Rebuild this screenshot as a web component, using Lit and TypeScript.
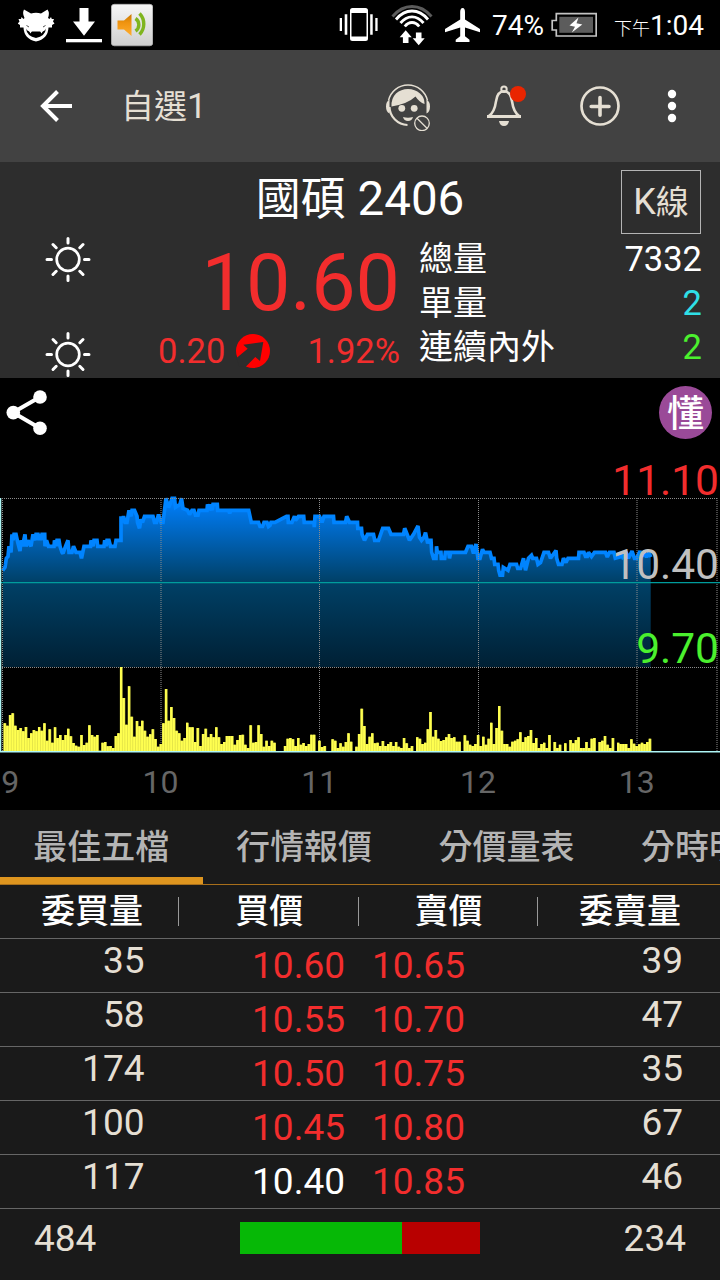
import { LitElement, html, css, svg } from "lit";
import { customElement } from "lit/decorators.js";

/* Intraday price samples: [x, ticks of 0.05 above the previous close]. */
const PRICES: [number, number][] = [
  [2.7, 2], [5, 2.5], [5.5, 3], [6.3, 4], [8, 4.3], [9, 6], [11, 5], [12, 8], [13, 7], [14, 8], [16, 8], [18, 6.5], [20, 5.2], [21, 7],
  [22.5, 6], [25, 8], [26, 6], [28, 7], [31, 6], [33, 8], [35, 7], [36, 8], [38, 8], [39, 7], [40, 8], [41, 7], [42, 8], [44.7, 8], [45, 6], [46.5, 7],
  [48.5, 6], [54, 6], [54.5, 7], [56, 6], [57, 7], [59, 7], [60, 6], [62, 5], [63, 4.8], [65.5, 6], [68, 7], [69, 5], [72, 5], [73.5, 6], [76, 5],
  [80, 5], [81.5, 4], [84, 6], [90.5, 6], [91, 7], [93, 6], [94, 7], [97, 7], [97.7, 6], [104, 6], [104.7, 7], [106, 6], [107, 7], [109, 7], [110.5, 6], [115, 6], [116, 7],
  [121, 7], [121, 11], [122, 10], [123.5, 11], [125, 10], [127, 10], [128, 11], [129, 12], [131, 11], [132, 12], [134.5, 12], [137, 11], [137.5, 10], [139.5, 9],
  [141, 10.5], [142.5, 10], [144.5, 11], [153, 11], [154.5, 10], [156.5, 10], [158.5, 11.3], [161, 10], [163, 10], [164.5, 12],
  [166, 14], [168.5, 12.5], [170, 13], [172, 14], [174.5, 14], [175.5, 12.5], [180, 13], [181.5, 14], [183, 12.3], [187.5, 12],
  [189.5, 11.3], [192, 12], [194, 12], [195.5, 11.2], [198, 11.2], [199, 12], [207, 12], [207.5, 13], [209, 12], [210, 13], [212, 12], [213, 13], [217.3, 13], [217.7, 12],
  [228.5, 12], [229.7, 11.5], [231, 12], [248.7, 12], [251.3, 10], [258.5, 10], [260, 9.3], [262.5, 9.3], [264, 10], [267, 10],
  [268.5, 9.3], [270, 9.5], [271, 10], [275, 10], [286.5, 11], [288, 11], [288.3, 10], [292, 10], [294.5, 11], [295.5, 10.3],
  [298.5, 11], [303.7, 11], [304.2, 10], [314, 10], [314.3, 9.2], [315, 11], [319.5, 11], [322, 10], [324, 11], [333.5, 11],
  [334, 10], [345.5, 10], [346.7, 11], [349.5, 10], [357.5, 10], [357.8, 9], [361.5, 9], [362, 8], [364.5, 7], [367.5, 8],
  [373.5, 8], [374.7, 7], [378.5, 7], [382.7, 9], [388.5, 9], [391, 8], [403.5, 8], [404.7, 9], [409.5, 7], [413.5, 8],
  [418, 9.4], [419.5, 7.5], [421.5, 7], [424, 7.5], [425.5, 8.3], [427.7, 6.5], [429, 7], [431, 7], [431.7, 5], [433.5, 4],
  [436, 4], [436.5, 6], [437.3, 5], [441, 5], [441.3, 4], [444.7, 4], [445.3, 5], [448.7, 5], [449.5, 4], [450.7, 5], [465.5, 5],
  [468, 6], [471.5, 6], [473.5, 4.8], [476, 6.4], [478, 4], [480, 4], [482.5, 5.5], [484, 5], [490, 5], [491.5, 4], [494, 4],
  [494.7, 3], [498, 3], [498.7, 2], [500, 1.2], [502.5, 1.2], [503.3, 2.5], [508, 2], [510, 3], [516.5, 3], [517.7, 2.3],
  [520.5, 2.3], [523.5, 4], [525.5, 2], [528.5, 4], [531.5, 4.5], [532.7, 4], [536.5, 4], [538, 3], [540.5, 3.3], [544, 5],
  [548.5, 5], [550.5, 4], [556, 5.3], [556.7, 4], [558.5, 3], [562, 3], [563.5, 4], [566, 3.3], [568, 4], [578.5, 4], [579, 5],
  [584, 5], [585.5, 4.3], [587.3, 4.3], [588.5, 5], [591.5, 4.3], [594.5, 5], [605.5, 5], [607.3, 4.2], [609.5, 5], [614, 5],
  [615.3, 4], [619.5, 4.2], [620.5, 5], [622.7, 4.2], [626.5, 4.8], [628.5, 4], [632, 5.2], [634.5, 4], [636.7, 4], [640, 5.2],
  [642, 4.3], [644, 5], [646.5, 4.2], [649, 5], [650.7, 4.2],
];

/* One bar a minute, the busiest one being 252. */
const VOLUMES = [
  83, 76, 108, 113, 76, 63, 69, 59, 72, 39, 53, 63, 59, 72, 61, 83, 31, 65, 25, 71, 39, 48, 33, 48, 67, 44, 24, 16, 13, 48, 18, 25,
  77, 48, 43, 48, 1, 25, 27, 14, 15, 9, 45, 53, 252, 159, 79, 194, 103, 43, 90, 74, 91, 61, 43, 50, 65, 36, 13, 21, 83, 186, 91,
  132, 99, 61, 53, 31, 39, 85, 71, 71, 27, 69, 15, 51, 67, 41, 51, 41, 71, 41, 21, 27, 45, 45, 45, 19, 33,
  48, 49, 19, 9, 77, 25, 27, 77, 51, 13, 31, 15, 31, 25, 0, 0, 0, 15, 37, 39, 35, 15, 39, 19, 24, 15, 21, 49, 49, 0, 31, 12, 15,
  0, 0, 35, 31, 9, 23, 13, 27, 53, 28, 0, 13, 51, 127, 75, 21, 43, 53, 23, 25, 15, 30, 15, 21, 27, 15, 27, 13, 9, 39, 23, 9, 15,
  0, 41, 37, 21, 25, 65, 117, 43, 63, 37, 30, 33, 41, 51, 39, 41, 28, 28, 0, 47, 31, 19, 15, 21, 48,
  15, 43, 19, 37, 85, 21, 69, 135, 61, 21, 21, 13, 28, 31, 35, 56, 27, 41, 45, 63, 24, 39, 9, 21, 25, 9, 48, 0, 27, 9, 19, 0, 23,
  0, 33, 23, 33, 41, 9, 9, 27, 9, 37, 39, 0, 27, 31, 45, 19, 9, 39, 0, 25, 21, 21, 21, 9, 35, 22, 15, 20, 25, 21, 27, 37,
];

const FONT = css`
  :host {
    font-family: Roboto, "Noto Sans CJK TC", sans-serif;
  }
  svg {
    display: block;
    flex: none;
  }
`;

@customElement("status-bar")
class StatusBar extends LitElement {
  static styles = [FONT, css`
    :host {
      display: flex;
      height: 50px;
      box-sizing: border-box;
      background: #000;
      color: #fff;
      padding: 0 16px 0 18px;
    }
    .left { display: flex; gap: 10px; }
    .speaker { margin-left: -1px; }
    .right { display: flex; margin-left: auto; }
    .wifi { margin-left: 12px; }
    .plane { margin-left: 11px; }
    .battery { margin-left: 5.5px; }
    .text { font-size: 28px; line-height: 50px; padding-top: 1px; white-space: nowrap; }
    .pct { margin-left: 11.5px; width: 53px; }
    .time { margin-left: 17.5px; }
    .ampm { font-size: 18px; font-weight: 300; }
  `];
  render() {
    return html`
      <div class="left">
        <svg width="38" height="50" viewBox="18 0 38 50">
          <path fill="#fff" d="M24 9.5 L31 13.5 Q36 11.8 41 13.5 L47.5 9.5 Q50 13 48 18 L49.5 19 L51 17 L51.8 19 L54 19 L53 21.5 L54.5 23.5 L52 25 L52 27.5 L48.5 27.5 Q48 39 36 41.5 Q24 39 23.5 27.5 L20 27.5 L20 25 L17.8 23.5 L19.5 21.5 L18.5 19 L21 19 L21.5 17 L23.5 19 L24.5 18 Q22 13 24 9.5Z"/>
          <path fill="none" stroke="#000" stroke-width=".7" d="M26.500 25.500 L29 27 M45.500 25.500 L43 27"/>
          <path fill="#000" d="M26 28.500 Q27.500 32 31 31.500 L41 31.500 Q44.500 32 46 28.500 Q45 36.500 36 38 Q27 36.500 26 28.500Z"/>
          <path fill="#fff" d="M29 31 l1.500 2.500 1.500-2.500z M40 31 l1.500 2.500 1.500-2.500z"/>
        </svg>
        <svg width="36" height="50" viewBox="66 0 36 50" fill="#fff">
          <path d="M79.500 8h9v13.500h6.500L84 35.800 73 21.500h6.500z"/>
          <rect x="66" y="39" width="36" height="3.300"/>
        </svg>
        <svg class="speaker" width="42" height="50" viewBox="111 0 42 50">
          <defs>
            <linearGradient id="plate" x1="0" y1="0" x2="0" y2="1"><stop offset="0" stop-color="#f6f6f6"/><stop offset="1" stop-color="#cfcfcf"/></linearGradient>
            <linearGradient id="cone" x1="0" y1="0" x2="0" y2="1"><stop offset="0" stop-color="#c87800"/><stop offset=".4" stop-color="#f09410"/><stop offset="1" stop-color="#ffae30"/></linearGradient>
          </defs>
          <rect x="111.300" y="4.300" width="41.500" height="41.500" rx="3" fill="url(#plate)" stroke="#b4b4b4" stroke-width=".7"/>
          <path d="M117.500 20.500h6.500l7.500-6.500v22l-7.500-6.500h-6.500z" fill="url(#cone)"/>
          <path d="M135.500 18.500a7.500 7.500 0 0 1 0 12.500M139.500 13.500a15 15 0 0 1 0 21" fill="none" stroke="#7fb51e" stroke-width="3.400"/>
        </svg>
      </div>
      <div class="right">
        <svg width="40" height="50" viewBox="339 0 40 50" fill="#fff">
          <path fill-rule="evenodd" d="M352.500 8h13q2.500 0 2.500 2.500v28q0 2.500-2.500 2.500h-13q-2.500 0-2.500-2.500v-28q0-2.500 2.500-2.500zM351.500 13v23.500h15v-23.500z"/>
          <path d="M344.700 14.300h2.600v20.500h-2.600zM339.700 18h2.300v13h-2.300zM370.200 14.300h2.500v20.500h-2.500zM375.300 18h2.300v13h-2.300z"/>
        </svg>
        <svg class="wifi" width="42" height="50" viewBox="391 0 42 50" fill="none" stroke="#fff" stroke-width="2.800">
          <path stroke="#5b5b5b" d="M392.500 16.500q8.500-10 19.500-10t19.500 10"/>
          <path d="M396 19.500q7-8.500 16-8.500t16 8.500M400.500 23q5-6.200 11.500-6.200t11.500 6.200M404.800 26.500q3-4 7.200-4t7.200 4"/>
          <path fill="#fff" stroke="none" d="M405.700 30.300l6 7h-3.200v5.700h-5.600v-5.700h-3.200zM418.700 45.300l-6-7h3.200v-5.900h5.600v5.900h3.200z"/>
        </svg>
        <svg class="plane" width="37" height="50" viewBox="444 0 37 50" fill="#fff">
          <path d="M462.600 8c1.800 0 2.400 2 2.400 4v7.500l15 9.500v3.300l-15-4.800v8.800l4.500 3.500v2.200h-13.800v-2.200l4.500-3.500v-8.800l-15.200 4.800v-3.300l15.200-9.500v-7.500c0-2 .7-4 2.400-4z"/>
        </svg>
        <span class="text pct">74%</span>
        <svg class="battery" width="46" height="50" viewBox="551 0 46 50">
          <path d="M556.300 13.700h39.900v22.300h-39.900v-6h-4.100v-9.500h4.100z" fill="none" stroke="#c4c4c4" stroke-width="1.700"/>
          <rect x="559.300" y="16.800" width="33.700" height="16" fill="#5c5c5c"/>
          <path fill="#fff" d="M578.500 17.500l-9 8 5.500 1.200-3.200 5.800 10.500-8-5.800-1.200z"/>
        </svg>
        <span class="text time"><span class="ampm">下午</span>1:04</span>
      </div>`;
  }
}

@customElement("app-bar")
class AppBar extends LitElement {
  static styles = [FONT, css`
    :host {
      display: flex;
      align-items: center;
      height: 112px;
      background: #424242;
      color: #e5dfd3;
    }
    .back { margin-left: 39px; }
    .title { font-size: 35px; margin-left: 48px; line-height: 112px; padding-top: 2px; }
    .cjk { font-size: 33px; }
    .agent { margin-left: auto; }
    .bell { margin-left: 55px; }
    .add { margin-left: 53px; }
    .more { margin-left: 46px; margin-right: 42px; }
  `];
  render() {
    return html`
      <svg class="back" width="34" height="34" viewBox="39 89 34 34" fill="none" stroke="#fff" stroke-width="4">
        <path d="M57.500 91.500 L43 106 L57.500 120.500M43 106H72"/>
      </svg>
      <span class="title"><span class="cjk">自選</span>1</span>
      <svg class="agent" width="46" height="50" viewBox="385 81 46 50">
        <path d="M389.500 107a18.500 18.500 0 0 0 18 18" fill="none" stroke="#e5dfd3" stroke-width="2.200"/>
        <path d="M388.500 100.500a20 20 0 0 1 39 0" fill="none" stroke="#e5dfd3" stroke-width="1.500"/>
        <path d="M391.500 106.500q-.5-8 4.500-13 5-4.500 12-4.500t12 4.500q4.500 4 4.500 9.500v1q-5-1.500-9-7.500-8 7.500-24 10z" fill="#e5dfd3"/>
        <path d="M389.500 100q-3.500 1-3.500 6.500t3.500 7zM426.500 100q3.500 1 3.500 6.500t-3.500 7z" fill="#e5dfd3"/>
        <circle cx="401.800" cy="108.300" r="3.400" fill="#e5dfd3"/><circle cx="414.200" cy="108.300" r="3.400" fill="#e5dfd3"/>
        <path d="M403 117q5 1.500 10 0-1 4-5 4t-5-4z" fill="#e5dfd3"/>
        <circle cx="422" cy="123.500" r="9" fill="#424242"/>
        <g fill="none" stroke="#e5dfd3" stroke-width="1.300"><circle cx="422" cy="123.300" r="7.300"/><path d="M417 118.300l10 10"/></g>
      </svg>
      <svg class="bell" width="41" height="44" viewBox="486 84 41 44">
        <path d="M488.500 116.300q6-3.800 7.500-15 1.400-10 8-10t8 10q1.500 11.200 7.500 15z" fill="none" stroke="#e5dfd3" stroke-width="2.600" stroke-linejoin="round"/>
        <path d="M487 115h34v3h-34zM499 121h10q-.8 5-5 5t-5-5z" fill="#e5dfd3"/>
        <circle cx="504" cy="89.300" r="2.700" fill="none" stroke="#e5dfd3" stroke-width="2"/>
        <circle cx="518" cy="94" r="8" fill="#e92500"/>
      </svg>
      <svg class="add" width="40" height="40" viewBox="580 86 40 40" fill="none" stroke="#e5dfd3">
        <circle cx="600" cy="106" r="18.500" stroke-width="2.700"/>
        <path d="M600 97.500v17.800M591.200 106.500h17.800" stroke-width="3.600" stroke-linecap="round"/>
      </svg>
      <svg class="more" width="12" height="34" viewBox="666 89 12 34" fill="#fff">
        <circle cx="672" cy="94" r="4.200"/><circle cx="672" cy="106" r="4.200"/><circle cx="672" cy="118" r="4.200"/>
      </svg>`;
  }
}

const sun = html`
  <svg width="46" height="46" viewBox="-23 -23.500 46 46" fill="none" stroke="#fff">
    <circle r="11.300" stroke-width="2.700"/>
    <path stroke-width="3" stroke-linecap="round"
      d="M0-21v4.500M0 21v-4.500M-21 0h4.500M21 0h-4.500M-15-15l3.200 3.200M15-15l-3.200 3.200M-15 15l3.200-3.200M15 15l-3.200-3.200"/>
  </svg>`;

@customElement("quote-panel")
class QuotePanel extends LitElement {
  static styles = [FONT, css`
    :host {
      display: grid;
      grid-template-columns: 136px 264px 1fr;
      grid-template-rows: 74px 142px;
      height: 216px;
      overflow: hidden;
      background: #2d2d2d;
      color: #fff;
    }
    .name {
      grid-area: 1 / 1 / 2 / 4;
      text-align: center;
      font-size: 47.500px;
      line-height: 75px;
    }
    .name .cjk { font-size: 45px; }
    .kline {
      grid-area: 1 / 1 / 2 / 4;
      justify-self: end;
      box-sizing: border-box;
      width: 80px;
      height: 64px;
      margin: 8px 19px 0 0;
      border: 1px solid #b4b4b4;
      text-align: center;
      font-size: 36px;
      line-height: 62px;
      color: #e5dfd3;
      white-space: nowrap;
    }
    .kline .cjk { font-size: 33px; }
    .weather { display: flex; flex-direction: column; align-items: center; gap: 49px; }
    .price { color: #f22d2d; }
    .last { font-size: 79px; line-height: 95px; text-align: right; }
    .change { display: flex; align-items: center; justify-content: space-between; font-size: 34.500px; line-height: 40px; padding-left: 22px; }
    .delta { display: flex; align-items: center; gap: 10px; }
    .stats { padding: 1px 18px 0 19px; }
    .stat { display: flex; justify-content: space-between; height: 44px; line-height: 45px; font-size: 34.500px; }
    .label { font-size: 34px; line-height: 44px; }
    .cyan { color: #2fdfe6; }
    .green { color: #4bf02e; }
  `];
  render() {
    return html`
      <div class="name"><span class="cjk">國碩</span> 2406</div>
      <div class="kline">K<span class="cjk">線</span></div>
      <div class="weather">${sun}${sun}</div>
      <div class="price">
        <div class="last">10.60</div>
        <div class="change">
          <span class="delta">0.20
            <svg width="36" height="36" viewBox="-18 -18 36 36">
              <circle r="17" fill="#ff0000"/>
              <path fill="#2d2d2d" d="M-9.700-6.300 L10.300-9 L7 10 L2.300 6 L-7.500 16 L-14 15 L-16.500 7 L-5.300-2.300Z"/>
            </svg>
          </span>
          <span>1.92%</span>
        </div>
      </div>
      <div class="stats">
        <div class="stat"><span class="label">總量</span><span>7332</span></div>
        <div class="stat"><span class="label">單量</span><span class="cyan">2</span></div>
        <div class="stat"><span class="label">連續內外</span><span class="green">2</span></div>
      </div>`;
  }
}

@customElement("intraday-chart")
class IntradayChart extends LitElement {
  static styles = [FONT, css`
    :host { display: block; background: #000; height: 432px; overflow: hidden; }
    .tools { display: flex; justify-content: space-between; height: 70px; box-sizing: border-box; padding: 8px 8px 0 6px; }
    .badge {
      width: 53px;
      height: 53px;
      border-radius: 50%;
      background: #9a4a98;
      color: #fff;
      font-size: 37px;
      font-weight: 500;
      line-height: 57px;
      text-align: center;
    }
    .grid { stroke: #8c8c8c; stroke-width: 1; stroke-dasharray: 1 1; fill: none; }
    .axis { font-size: 32px; fill: #666; text-anchor: middle; }
    .level { font-size: 42.500px; text-anchor: end; }
  `];
  render() {
    const line = PRICES.map(([x, k], i) => `${i ? "L" : "M"}${x} ${(582.3 - 6 * k).toFixed(1)}`).join("");
    const step = 2.644;
    const bars = (w: number) =>
      VOLUMES.map((v, i) => (v ? `M${(3.6 + i * step).toFixed(2)} 751v${(-v / 3).toFixed(1)}h${w}v${(v / 3).toFixed(1)}z` : "")).join("");
    return html`
      <div class="tools">
        <svg width="42" height="53" viewBox="6 386 42 53">
          <path d="M40 397 L13 412.500 L40 428.300" fill="none" stroke="#fff" stroke-width="4"/>
          <g fill="#fff"><circle cx="40" cy="397" r="6.800"/><circle cx="13.300" cy="412.600" r="6.800"/><circle cx="40" cy="428.300" r="6.800"/></g>
        </svg>
        <div class="badge">懂</div>
      </div>
      <svg width="720" height="362" viewBox="0 448 720 362">
        <defs>
          <linearGradient id="area" gradientUnits="userSpaceOnUse" x1="0" y1="498" x2="0" y2="667">
            <stop offset="0" stop-color="#0080ff"/>
            <stop offset=".5" stop-color="#004066"/>
            <stop offset="1" stop-color="#002034"/>
          </linearGradient>
        </defs>
        <path fill="url(#area)" d="${line}V667H2.700Z"/>
        <path d="${line}" fill="none" stroke="#0084ff" stroke-width="3.700" stroke-linejoin="miter" stroke-miterlimit="2"/>
        <path class="grid" d="M2 498.500H718M2 667.500H718M2.500 498V751M161 498V751M319.500 498V751M478.500 498V751M637 498V751M717 498V751"/>
        <path fill="#d9d946" d="${bars(2.65)}"/>
        <path fill="#ffff50" d="${bars(2)}"/>
        <path fill="#009c9c" d="M0 582h720v1.300H0z"/>
        <path fill="#aef6f6" d="M0 498h1.300v253H0zM0 751h720v1.500H0z"/>
        ${svg`<g class="axis">
          <text x="10.300" y="793">9</text>
          ${[10, 11, 12, 13].map((h, i) => svg`<text x=${160.4 + i * 158.8} y="793">${h}</text>`)}
        </g>`}
        <g class="level">
          <text x="719" y="495" fill="#f22d2d">11.10</text>
          <text x="719" y="579" fill="#c0c0c0">10.40</text>
          <text x="719" y="663" fill="#4bf02e">9.70</text>
        </g>
      </svg>`;
  }
}

@customElement("order-book")
class OrderBook extends LitElement {
  static styles = [FONT, css`
    :host { display: block; height: 470px; background: #1a1a1a; color: #e5dfd3; }
    .tabs { display: flex; height: 75px; overflow: hidden; box-sizing: border-box; border-bottom: 1px solid #a86f1b; }
    .tab {
      flex: none;
      width: 202.600px;
      height: 74px;
      box-sizing: border-box;
      border-bottom: 7px solid transparent;
      text-align: center;
      font-size: 34px;
      font-weight: 500;
      line-height: 75px;
      color: #b4b4b4;
      white-space: nowrap;
    }
    .active { border-bottom-color: #de951f; }
    .head, .row { display: grid; height: 54px; box-sizing: border-box; border-bottom: 1px solid #666; line-height: 53px; }
    .head { grid-template-columns: 179.400px 179.600px 179px 1fr; font-size: 34px; font-weight: 500; color: #fff; }
    .head .last { text-align: right; padding-right: 39px; }
    .head .sep { display: flex; align-items: center; justify-content: flex-end; }
    .head .sep::after { content: ""; width: 1px; height: 29px; background: #999; }
    .head .sep b { flex: 1; font-weight: 500; text-align: center; padding-left: 1px; }
    .head .sep.start b { text-align: right; padding-right: 35.500px; }
    .row { grid-template-columns: 144.500px 200.500px 27px 199px 1fr; font-size: 37px; }
    .qty { line-height: 44px; text-align: right; }
    .bid { text-align: right; grid-column: 2; }
    .ask { grid-column: 4; }
    .row .offer { padding-right: 37px; }
    .up { color: #f22d2d; }
    .flat { color: #fff; }
    .total { display: flex; align-items: center; justify-content: space-between; height: 58px; padding: 0 34px; font-size: 37px; }
    .meter { display: flex; width: 240px; height: 32px; background: #b80000; }
    .fill { background: #06b806; }
  `];
  private rows = [
    [35, "10.60", "10.65", 39],
    [58, "10.55", "10.70", 47],
    [174, "10.50", "10.75", 35],
    [100, "10.45", "10.80", 67],
    [117, "10.40", "10.85", 46],
  ] as const;
  render() {
    const bid = 484;
    const ask = 234;
    return html`
      <div class="tabs">
        ${["最佳五檔", "行情報價", "分價量表", "分時明細"].map((t, i) => html`<div class="tab ${i ? "" : "active"}">${t}</div>`)}
      </div>
      <div class="head">
        <span class="sep start"><b>委買量</b></span>
        <span class="sep"><b>買價</b></span>
        <span class="sep"><b>賣價</b></span>
        <span class="last">委賣量</span>
      </div>
      ${this.rows.map(([bq, b, a, aq]) => html`
        <div class="row">
          <span class="qty">${bq}</span>
          <span class="bid ${b === "10.40" ? "flat" : "up"}">${b}</span>
          <span class="ask up">${a}</span>
          <span class="qty offer">${aq}</span>
        </div>`)}
      <div class="total">
        <span>${bid}</span>
        <div class="meter"><div class="fill" style="width:${(bid / (bid + ask)) * 100}%"></div></div>
        <span>${ask}</span>
      </div>`;
  }
}

@customElement("app-root")
class AppRoot extends LitElement {
  static styles = css`
    :host { display: block; width: 720px; height: 1280px; overflow: hidden; background: #1a1a1a; }
  `;
  render() {
    return html`
      <status-bar></status-bar>
      <app-bar></app-bar>
      <quote-panel></quote-panel>
      <intraday-chart></intraday-chart>
      <order-book></order-book>`;
  }
}
